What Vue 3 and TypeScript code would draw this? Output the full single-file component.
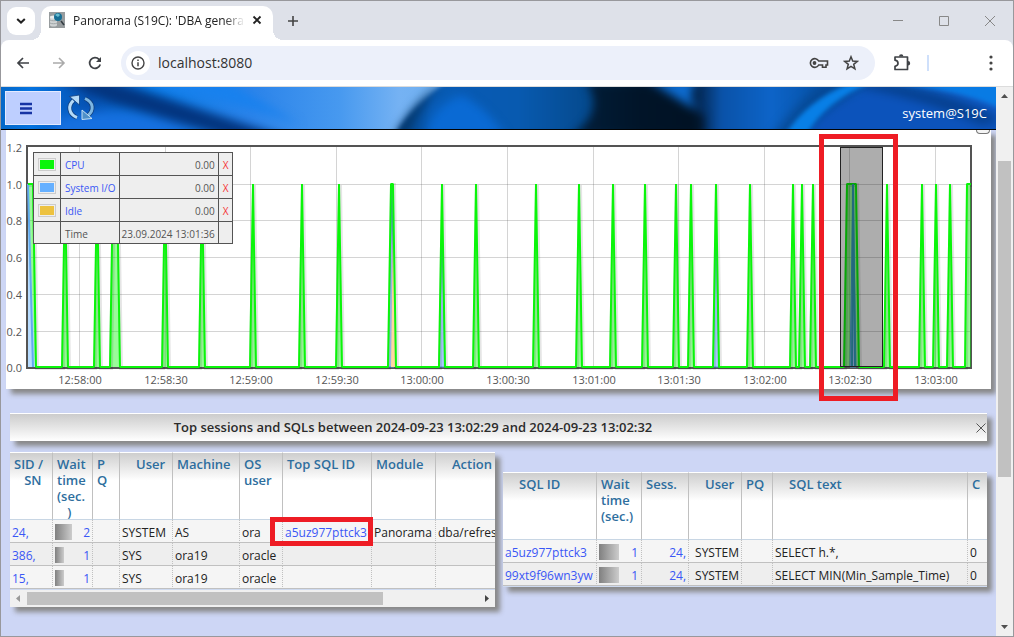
<script setup lang="ts">
interface Column {
  label: string
  width: number
  kind?: 'link' | 'bar' | 'right' | 'numlink'
  indent?: boolean
}
interface Cell {
  text: string
  bar?: number
  marked?: boolean
}

const legend = [
  { name: 'CPU', value: '0.00', color: 'green' },
  { name: 'System I/O', value: '0.00', color: 'blue' },
  { name: 'Idle', value: '0.00', color: 'amber' },
]

const base = 237
const top = 54
const left = 22
const right = 965

const peaks: [number, number][] = [
  [59, 59], [91, 91], [107, 111], [159, 159], [196, 196], [247, 247], [296, 296], [333, 333],
  [385, 387], [436, 436], [470, 470], [530, 530], [573, 573], [607, 607], [639, 639], [670, 670],
  [685, 685], [710, 710], [744, 744], [787, 787], [796, 796], [807, 807], [841, 850],
  [881, 881], [916, 916], [930, 930], [944, 944],
]

const spikes = peaks.map(([a, b]) => `${a - 3},${base} ${a},${top} ${b},${top} ${b + 3},${base}`)
const cpuPoints = [`${left},${top} 27,${top} 30,${base}`, ...spikes, `959,${base} 961,${top} ${right},${top}`].join(' ')
const cpuArea = `${left},${base} ${cpuPoints} ${right},${base}`
const ioAreas = [
  `382,${base} 386,${top} 388,${base}`,
  `433,${base} 436,100 439,${base}`,
  `707,${base} 710,100 713,${base}`,
  `844,${base} 847,${top} 850,${base}`,
]
const ioLine = `22,${top} 27,${base}`

const yTicks = ['1.2', '1.0', '0.8', '0.6', '0.4', '0.2', '0.0'].map((label, i) => ({
  label,
  y: Math.round(17 + i * 36.7),
}))
const xTicks = [
  '12:58:00', '12:58:30', '12:59:00', '12:59:30', '13:00:00', '13:00:30',
  '13:01:00', '13:01:30', '13:02:00', '13:02:30', '13:03:00',
].map((label, i) => ({ label, x: Math.round(73 + i * 85.6) }))

const sessionCols: Column[] = [
  { label: 'SID /\n\u00a0\u00a0\u00a0SN', width: 43, kind: 'link' },
  { label: 'Wait\ntime\n(sec.\n\u00a0\u00a0\u00a0)', width: 40, kind: 'bar' },
  { label: 'P\nQ', width: 27 },
  { label: 'User', width: 53, indent: true },
  { label: 'Machine', width: 67 },
  { label: 'OS\nuser', width: 43 },
  { label: 'Top SQL ID', width: 89, kind: 'link' },
  { label: 'Module', width: 64 },
  { label: 'Action', width: 80, indent: true },
]
const sessionRows: Cell[][] = [
  [{ text: '24,' }, { text: '2', bar: 17 }, { text: '' }, { text: 'SYSTEM' }, { text: 'AS' }, { text: 'ora' }, { text: 'a5uz977pttck3', marked: true }, { text: 'Panorama' }, { text: 'dba/refresh' }],
  [{ text: '386,' }, { text: '1', bar: 9 }, { text: '' }, { text: 'SYS' }, { text: 'ora19' }, { text: 'oracle' }, { text: '' }, { text: '' }, { text: '' }],
  [{ text: '15,' }, { text: '1', bar: 9 }, { text: '' }, { text: 'SYS' }, { text: 'ora19' }, { text: 'oracle' }, { text: '' }, { text: '' }, { text: '' }],
]
const sqlCols: Column[] = [
  { label: 'SQL ID', width: 94, kind: 'link', indent: true },
  { label: 'Wait\ntime\n(sec.)', width: 45, kind: 'bar' },
  { label: 'Sess.', width: 47, kind: 'numlink' },
  { label: 'User', width: 53, kind: 'right', indent: true },
  { label: 'PQ', width: 31 },
  { label: 'SQL text', width: 195, indent: true },
  { label: 'C', width: 40 },
]
const sqlRows: Cell[][] = [
  [{ text: 'a5uz977pttck3' }, { text: '1', bar: 20 }, { text: '24,' }, { text: 'SYSTEM' }, { text: '' }, { text: 'SELECT h.*,' }, { text: '0' }],
  [{ text: '99xt9f96wn3yw' }, { text: '1', bar: 20 }, { text: '24,' }, { text: 'SYSTEM' }, { text: '' }, { text: 'SELECT MIN(Min_Sample_Time)' }, { text: '0' }],
]
const grids = [
  { id: 'sessions', cols: sessionCols, rows: sessionRows, scroll: true },
  { id: 'sqls', cols: sqlCols, rows: sqlRows, scroll: false },
]
const total = (cols: Column[]) => cols.reduce((sum, c) => sum + c.width, 0)
const isLink = (c: Column) => c.kind === 'link' || c.kind === 'numlink'
</script>

<template>
  <div class="window">
    <div class="tabstrip">
      <button class="tab-search" aria-label="Search tabs">
        <svg width="10" height="6" viewBox="0 0 10 6"><path d="M1.2 1 5 4.6 8.8 1" fill="none" stroke="#222" stroke-width="2" /></svg>
      </button>
      <div class="tab">
        <svg class="favicon" width="16" height="16" viewBox="0 0 16 16">
          <rect width="16" height="16" fill="#979c9e" />
          <path d="M1 5v8c0 2 7 2 7 0V5z" fill="#cfd3d4" />
          <ellipse cx="4.5" cy="5" rx="3.5" ry="1.5" fill="#eceeee" />
          <path d="M1 8c1 1 6 1 7 0M1 11c1 1 6 1 7 0" stroke="#a0a6a8" fill="none" />
          <circle cx="9" cy="5" r="4" fill="#176f95" /><path d="M6 3q3-3 5 0l-2 2z" fill="#68bdd1" />
          <path d="m12 9 3 4" stroke="#333c42" stroke-width="1.500" />
        </svg>
        <span class="tab-title">Panorama (S19C): 'DBA genera</span>
        <button class="plain tab-close" aria-label="Close tab">
          <svg width="10" height="10" viewBox="0 0 10 10"><path d="m1.500 1.500 7 7m0-7-7 7" stroke="#222" stroke-width="1.800" /></svg>
        </button>
      </div>
      <button class="plain new-tab" aria-label="New tab">
        <svg width="12" height="12" viewBox="0 0 12 12"><path d="M6 1v10M1 6h10" stroke="#444" stroke-width="1.600" /></svg>
      </button>
      <div class="controls">
        <button class="plain" aria-label="Minimize"><svg width="12" height="12" viewBox="0 0 12 12"><path d="M1 5.500h10" stroke="#888" /></svg></button>
        <button class="plain" aria-label="Maximize"><svg width="12" height="12" viewBox="0 0 12 12"><path d="M1.500 1.500h9v9h-9z" fill="none" stroke="#888" /></svg></button>
        <button class="plain" aria-label="Close"><svg width="12" height="12" viewBox="0 0 12 12"><path d="m1 1 10 10m0-10L1 11" stroke="#888" /></svg></button>
      </div>
    </div>

    <div class="toolbar">
      <button class="plain nav" aria-label="Back"><svg width="16" height="16" viewBox="0 0 16 16"><path d="M14 8H3m5-5L3 8l5 5" fill="none" stroke="#3f4246" stroke-width="1.700" /></svg></button>
      <button class="plain nav" aria-label="Forward"><svg width="16" height="16" viewBox="0 0 16 16"><path d="M2 8h11M8 3l5 5-5 5" fill="none" stroke="#aaa" stroke-width="1.600" /></svg></button>
      <button class="plain nav" aria-label="Reload"><svg width="16" height="16" viewBox="0 0 16 16"><path d="M13.200 9.500A5.400 5.400 0 1 1 12 4.300l1.200 1.500" fill="none" stroke="#3f4246" stroke-width="1.800" /><path d="M14 2v5H9z" fill="#3f4246" /></svg></button>
      <div class="omnibox">
        <button class="site-info" aria-label="Site information"><svg width="14" height="14" viewBox="0 0 14 14"><circle cx="7" cy="7" r="6" fill="none" stroke="#444" stroke-width="1.400" /><path d="M7 6.200v4M7 3.500v1.600" stroke="#444" stroke-width="1.500" /></svg></button>
        <input class="url" aria-label="Address" value="localhost:8080">
        <button class="plain" aria-label="Passwords">
          <svg width="20" height="12" viewBox="0 0 20 12"><path d="M9.700 4A4.400 4.400 0 1 0 9.700 8H13.500v2.200h3.500V8h1.500V4z" fill="none" stroke="#444" stroke-width="1.600" /><circle cx="5.500" cy="6" r="1.900" fill="#444" /></svg>
        </button>
        <button class="plain star" aria-label="Bookmark"><svg width="16" height="16" viewBox="0 0 16 16"><path d="m8 1.800 1.700 4.300 4.500.3-3.500 2.900 1.200 4.500L8 11.300l-3.900 2.500 1.200-4.500-3.500-2.900 4.500-.3z" fill="none" stroke="#444" stroke-width="1.500" /></svg></button>
      </div>
      <button class="plain ext" aria-label="Extensions"><svg width="18" height="18" viewBox="0 0 18 18"><path d="M2 3h12.500v12.500H2v-3.200q3-.5 3-3T2 6.200z" fill="none" stroke="#3f4246" stroke-width="1.700" stroke-linejoin="round" /><path d="M6 2.500a2.200 2.200 0 0 1 4.400 0zM15 7a2.200 2.200 0 0 1 0 4.400z" fill="#3f4246" /></svg></button>
      <span class="divider"></span>
      <button class="plain menu-dots" aria-label="Menu"><svg width="4" height="16" viewBox="0 0 4 16"><g fill="#444"><circle cx="2" cy="2" r="1.600" /><circle cx="2" cy="8" r="1.600" /><circle cx="2" cy="14" r="1.600" /></g></svg></button>
    </div>

    <div class="viewport">
      <main class="page">
        <header class="banner">
          <svg class="banner-art" viewBox="0 0 995 42" preserveAspectRatio="none">
            <defs>
              <linearGradient id="sky">
                <stop offset="0" stop-color="#0568c8" />
                <stop offset=".03" stop-color="#0473e0" />
                <stop offset=".09" stop-color="#0650b0" />
                <stop offset=".15" stop-color="#087ce8" />
                <stop offset=".25" stop-color="#2a83ea" />
                <stop offset=".34" stop-color="#4799ef" />
                <stop offset=".4" stop-color="#75b2f3" />
                <stop offset=".44" stop-color="#6fb0f0" />
              </linearGradient>
              <linearGradient id="deep">
                <stop offset="0" stop-color="#04407f" />
                <stop offset=".06" stop-color="#085bb5" />
                <stop offset=".2" stop-color="#085ab0" />
                <stop offset=".32" stop-color="#05498c" />
                <stop offset=".4" stop-color="#03264c" />
                <stop offset=".48" stop-color="#021a38" />
                <stop offset=".53" stop-color="#0a52a8" />
                <stop offset=".61" stop-color="#0d64c8" />
                <stop offset=".68" stop-color="#0755ad" />
                <stop offset=".8" stop-color="#0b58b7" />
                <stop offset="1" stop-color="#1b69d4" />
              </linearGradient>
              <filter id="soft" x="-20%" y="-50%" width="140%" height="200%" color-interpolation-filters="sRGB"><feGaussianBlur stdDeviation="5" /></filter>
              <filter id="edge" x="-20%" y="-50%" width="140%" height="200%" color-interpolation-filters="sRGB"><feGaussianBlur stdDeviation="2" /></filter>
            </defs>
            <rect width="995" height="42" fill="url(#sky)" />
            <g filter="url(#soft)">
              <path d="M55-8h45l50 14 140 46h-60L110 16z" fill="#03357f" />
              <path d="M60 30q70-18 150 22H40z" fill="#1670df" />
              <path d="M120-8h100l80 46q-70-26-180-46z" fill="#1881ee" />
            </g>
            <path d="M446-6H1010v54H394q18-30 52-54z" fill="url(#deep)" filter="url(#edge)" />
            <g filter="url(#soft)">
              <path d="M444-6q-20 18-40 54h-10q18-34 50-54z" fill="#043567" />
              <path d="M425 50q5-30 35-42 25 12 45 42z" fill="#0a6ad4" />
              <path d="M585-5h58l60 34v20H570q36-25 15-54z" fill="#01101f" opacity=".8" />
              <path d="M648-8h50q-15 16 0 32-20-10-50-32z" fill="#0d6bce" />
              <path d="M770 50q30-40 60-60h40q-40 30-50 60z" fill="#06448c" opacity=".7" />
              <path d="M800 50q30-35 65-48 75-5 135 20v28z" fill="#0c53bb" />
              <path d="M835-4h50q70 10 115 38l-20 4q-60-28-145-42z" fill="#053c84" opacity=".8" />
            </g>
            <path d="M784 48q22-35 66-52h20q-44 17-65 52z" fill="#087fe6" filter="url(#edge)" />
            <path d="M890-3h110v24q-45-20-110-24z" fill="#087be4" filter="url(#edge)" />
          </svg>
          <button class="menu-button" aria-label="Main menu"><svg width="12" height="13" viewBox="0 0 12 13"><path d="M0 2h12M0 6.500h12M0 11h12" stroke="#1734a4" stroke-width="2.400" /></svg></button>
          <button class="plain refresh" aria-label="Refresh">
            <svg width="28" height="28" viewBox="0 0 28 28">
              <path d="M10 23.500C1 20 1 11 6.500 6.500M18 4.500c9 4 9 12 3 17" fill="none" stroke="#123f7c" stroke-width="4.500" />
              <path d="M10 23.500C1 20 1 11 6.500 6.500" fill="none" stroke="#b4daf8" stroke-width="3" />
              <path d="M18 4.500c9 4 9 12 3 17" fill="none" stroke="#7db6e2" stroke-width="3" />
              <path d="M2.500 2.500 12.500 1v10z" fill="#b4daf8" stroke="#123f7c" stroke-width=".8" />
              <path d="M25 24.500 15 25.500V16z" fill="#4f90c8" stroke="#c4e0f5" stroke-width="1" />
            </svg>
          </button>
          <span class="account">system@S19C</span>
        </header>

        <section class="chart-panel">
          <svg class="chart" viewBox="0 0 985 259">
            <g stroke="#545454" stroke-opacity=".25" stroke-width="1" shape-rendering="crispEdges">
              <path v-for="t in yTicks.slice(1, 6)" :key="t.label" :d="`M21 ${t.y}.5H966`" />
              <path v-for="t in xTicks" :key="t.label" :d="`M${t.x}.5 16V238`" />
            </g>
            <rect x="21" y="16" width="944" height="222" fill="none" stroke="#545454" stroke-width="2" />
            <polygon :points="cpuArea" fill="#00f500" fill-opacity=".4" />
            <polygon points="22,54 29,237 22,237" fill="#b7dcff" />
            <polygon v-for="p in ioAreas" :key="p" :points="p" fill="#a9c9ff" stroke="#4d9bd0" stroke-width="1" />
            <path d="M385 237 387 90 390 237z" fill="#ffd7a0" />
            <polyline :points="ioLine" fill="none" stroke="#62abee" stroke-width="2" />
            <polyline :points="cpuPoints" fill="none" stroke="#000" stroke-opacity=".1" stroke-width="4" transform="translate(1 1)" />
            <polyline :points="cpuPoints" fill="none" stroke="#0af50a" stroke-width="2" stroke-linejoin="bevel" />
            <path d="M847 54 846 237M847 54 849 237" stroke="#339bb9" stroke-width="2" />
            <rect x="834.500" y="17.500" width="42" height="219" fill="#000" fill-opacity=".32" stroke="#222" />
            <g class="ticks">
              <text v-for="t in yTicks" :key="t.label" x="16" :y="t.y + 5" text-anchor="end">{{ t.label }}</text>
              <text v-for="t in xTicks" :key="t.label" :x="t.x + 1" y="254" text-anchor="middle">{{ t.label }}</text>
            </g>
            <rect x="815.500" y="6.500" width="74" height="262" fill="none" stroke="#ee1c24" stroke-width="5" />
          </svg>
          <table class="legend">
            <tbody>
              <tr v-for="item in legend" :key="item.name">
                <td class="swatch-cell"><span class="swatch" :class="item.color"></span></td>
                <td class="series"><a href="#">{{ item.name }}</a></td>
                <td class="value">{{ item.value }}</td>
                <td class="remove"><a href="#">X</a></td>
              </tr>
              <tr class="time-row">
                <td></td><td class="series">Time</td><td class="value">23.09.2024 13:01:36</td><td></td>
              </tr>
            </tbody>
          </table>
          <button class="chart-menu" aria-label="Chart menu"></button>
        </section>

        <div class="titlebar">
          <h2>Top sessions and SQLs between 2024-09-23 13:02:29 and 2024-09-23 13:02:32</h2>
          <button class="plain" aria-label="Close panel"><svg width="10" height="10" viewBox="0 0 10 10"><path d="m.5.5 9 9m0-9-9 9" stroke="#555" /></svg></button>
        </div>

        <div class="grids">
          <section v-for="g in grids" :key="g.id" class="grid" :class="g.id">
            <table :style="{ width: total(g.cols) + 'px' }">
              <colgroup><col v-for="c in g.cols" :key="c.label" :style="{ width: c.width + 'px' }"></colgroup>
              <thead>
                <tr><th v-for="c in g.cols" :key="c.label" :class="{ indent: c.indent }"><span class="label">{{ c.label }}</span></th></tr>
              </thead>
              <tbody>
                <tr v-for="(row, r) in g.rows" :key="r">
                  <td v-for="(cell, i) in row" :key="i" :class="[g.cols[i].kind, { marked: cell.marked }]">
                    <span v-if="cell.bar" class="bar-cell">
                      <span class="bar" :style="{ width: cell.bar + 'px' }"></span>
                      <a href="#">{{ cell.text }}</a>
                    </span>
                    <a v-else-if="isLink(g.cols[i]) && cell.text" href="#">{{ cell.text }}</a>
                    <template v-else>{{ cell.text }}</template>
                  </td>
                </tr>
              </tbody>
            </table>
            <div v-if="g.scroll" class="hscroll">
              <svg width="17" height="17" viewBox="0 0 17 17"><path d="M10 5v7L6 8.500z" fill="#999" /></svg>
              <div class="hscroll-track"><div class="hscroll-thumb"></div></div>
              <svg width="17" height="17" viewBox="0 0 17 17"><path d="M7 5v7l4-3.500z" fill="#444" /></svg>
            </div>
          </section>
        </div>
      </main>
      <div class="vscroll">
        <svg width="17" height="17" viewBox="0 0 17 17"><path d="M5 11h7L8.500 7z" fill="#505050" /></svg>
        <div class="vscroll-track"><div class="vscroll-thumb"></div></div>
        <svg width="17" height="17" viewBox="0 0 17 17"><path d="M5 6h7l-3.500 4z" fill="#505050" /></svg>
      </div>
    </div>
  </div>
</template>

<style>
body { margin: 0; background: #cdd6f5; }
</style>

<style scoped>
* { box-sizing: border-box; }
svg { display: block; flex: none; }
button, input { font: inherit; }
a { color: #3a57f5; text-decoration: none; }
.window {
  display: flex;
  flex-direction: column;
  height: 100vh;
  overflow: hidden;
  border: 1px solid #98989c;
  background: #dee1e9;
  font-family: "Open Sans", "Noto Sans", sans-serif;
  font-size: 12px;
  color: #222;
}
.plain { display: flex; align-items: center; justify-content: center; padding: 0; border: 0; background: none; }

.tabstrip { display: flex; align-items: center; height: 39px; flex: none; padding-left: 6px; }
.tab-search { display: flex; align-items: center; justify-content: center; width: 28px; height: 28px; padding: 0; border: 0; border-radius: 9px; background: #fff; }
.tab {
  position: relative;
  display: flex;
  align-items: center;
  align-self: flex-end;
  width: 232px;
  height: 34px;
  margin-left: 6px;
  padding: 0 8px 6px;
  border-radius: 10px 10px 0 0;
  background: #fff;
}
.tab::before, .tab::after { content: ""; position: absolute; bottom: 0; width: 10px; height: 10px; }
.tab::before { left: -10px; background: radial-gradient(circle at 0 0, transparent 10px, #fff 10px); }
.tab::after { right: -10px; background: radial-gradient(circle at 100% 0, transparent 10px, #fff 10px); }
.tab-title { width: 172px; margin-left: 8px; white-space: nowrap; -webkit-mask-image: linear-gradient(90deg, #000 88%, transparent); mask-image: linear-gradient(90deg, #000 88%, transparent); }
.tab-close { width: 16px; height: 16px; margin-left: 4px; }
.new-tab { width: 28px; height: 28px; margin-left: 6px; }
.controls { display: flex; margin-left: auto; }
.controls button { width: 46px; height: 30px; }

.toolbar { display: flex; align-items: center; height: 47px; flex: none; padding: 0 20px 0 12px; border-bottom: 1px solid #dcdcdc; border-radius: 8px 8px 0 0; background: #fff; }
.nav { width: 20px; height: 28px; margin-right: 16px; }
.omnibox { display: flex; align-items: center; flex: 1; height: 34px; padding: 0 16px 0 5px; border-radius: 17px; background: #ecf0fa; }
.site-info { display: flex; align-items: center; justify-content: center; width: 24px; height: 24px; padding: 0; border: 0; border-radius: 12px; background: #fff; }
.url { flex: 1; min-width: 0; height: 24px; margin-left: 8px; padding: 0 0 2px; border: 0; outline: 0; background: none; font-size: 14px; color: #333; }
.star { margin-left: 14px; }
.ext { margin-left: 18px; }
.divider { width: 2px; height: 16px; margin-left: 16px; background: #cfe0fb; }
.menu-dots { margin-left: 60px; }

.viewport { display: flex; flex: 1; min-height: 0; }
.page { flex: 1; min-width: 0; overflow: hidden; background: #cdd6f5; }
.banner { position: relative; display: flex; align-items: center; height: 43px; padding: 0 9px 0 4px; border-bottom: 1px solid #000; overflow: hidden; }
.banner-art { position: absolute; inset: 0; width: 100%; height: 100%; }
.menu-button { position: relative; display: flex; align-items: center; width: 56px; height: 34px; padding: 0 14px; border: 1px solid #e4eaff; background: #becfff; }
.refresh { position: relative; margin-left: 6px; }
.account { position: relative; margin: 9px 0 0 auto; color: #fff; font-size: 13px; line-height: 18px; }

.chart-panel { position: relative; z-index: 1; margin: 0 5px; background: #fff; box-shadow: 5px 5px 5px #888; }
.chart { width: 100%; height: auto; overflow: visible; }
.ticks { font-size: 11px; fill: #545454; }
.legend { position: absolute; left: 27px; top: 22px; border-collapse: collapse; background: #eee; color: #545454; font-size: 10px; line-height: 14px; }
.legend td { height: 23px; padding: 2px 4px 0; border: 1px solid #545454; white-space: nowrap; }
.legend .time-row td { height: 22px; }
.legend .swatch-cell { padding: 0 4px; }
.legend .series { padding: 2px 3px 0 4px; }
.legend .value { padding: 2px 3px 0 2px; text-align: right; }
.swatch { display: block; width: 18px; height: 13px; border: 1px solid #ccc; background-clip: content-box; padding: 1px; }
.green { background-color: #0af50a; }
.blue { background-color: #66b0ff; }
.amber { background-color: #edc240; }
.remove a { color: #f53434; }
.chart-menu { position: absolute; right: 1px; top: 0; width: 14px; height: 4px; padding: 0; border: 1px solid #777; border-top: 0; border-radius: 0 0 4px 4px; background: #f4f4f4; }

.titlebar { display: flex; align-items: center; height: 28px; margin: 24px 9px 0; padding-right: 1px; border-top: 1px solid #fff; background: linear-gradient(#ccc, #fff); box-shadow: 5px 5px 5px #888; }
.titlebar h2 { flex: 1; margin: 0; padding: 0 160px 2px 0; text-align: center; font-size: 13px; line-height: 18px; font-weight: 600; color: #2b2b2b; white-space: nowrap; }

.grids { display: grid; grid-template-columns: 1fr 1fr; align-items: start; gap: 9px; margin: 11px 9px 0; }
.grid { min-width: 0; overflow: hidden; padding-bottom: 1px; background: #cdd9ef; box-shadow: 5px 5px 5px #888; }
.sessions { padding-bottom: 0; margin-right: -1px; }
.sqls { margin-top: 20px; }
.grid table { table-layout: fixed; border-collapse: separate; border-spacing: 0; }
.grid thead tr { background: linear-gradient(#ccc, #fff 42%); }
.grid th { padding: 3px 0 0 4px; border-top: 1px solid #fff; border-right: 1px solid #c0c0c0; border-bottom: 1px solid #c8d6e4; text-align: left; vertical-align: top; white-space: pre; font-size: 13px; line-height: 16px; font-weight: 600; color: #2e6e9e; }
.grid th .label { display: block; height: 63px; }
.grid th.indent { padding-left: 16px; }
.grid td { height: 23px; padding: 4px 0 0 2px; border-right: 1px dotted #c0c0c0; border-bottom: 1px solid #c0c0c0; background: #f5f5f5; line-height: 18px; white-space: nowrap; }
.grid tr:nth-child(even) td { background: #eee; }
.grid td.right, .grid td.numlink { padding-right: 2px; text-align: right; }
.bar-cell { display: flex; justify-content: space-between; padding-right: 2px; }
.sqls .bar-cell { padding-right: 3px; }
.bar-cell .bar { height: 16px; background: linear-gradient(90deg, #808080, #ccc); }
.grid td.marked { position: relative; }
.grid td.marked::after { content: ""; position: absolute; inset: -3px -2px -4px -13px; border: 5px solid #ee1c24; }
.hscroll { display: flex; height: 17px; margin-top: 1px; background: #f0f0f0; }
.hscroll-track { flex: 1; padding: 2px 0; }
.hscroll-thumb { width: 79%; height: 13px; background: #c1c1c1; }
.vscroll { display: flex; flex-direction: column; width: 17px; flex: none; background: #f0f0f0; }
.vscroll-track { flex: 1; padding: 57px 2px 0; }
.vscroll-thumb { height: 69%; background: #c1c1c1; }
</style>
